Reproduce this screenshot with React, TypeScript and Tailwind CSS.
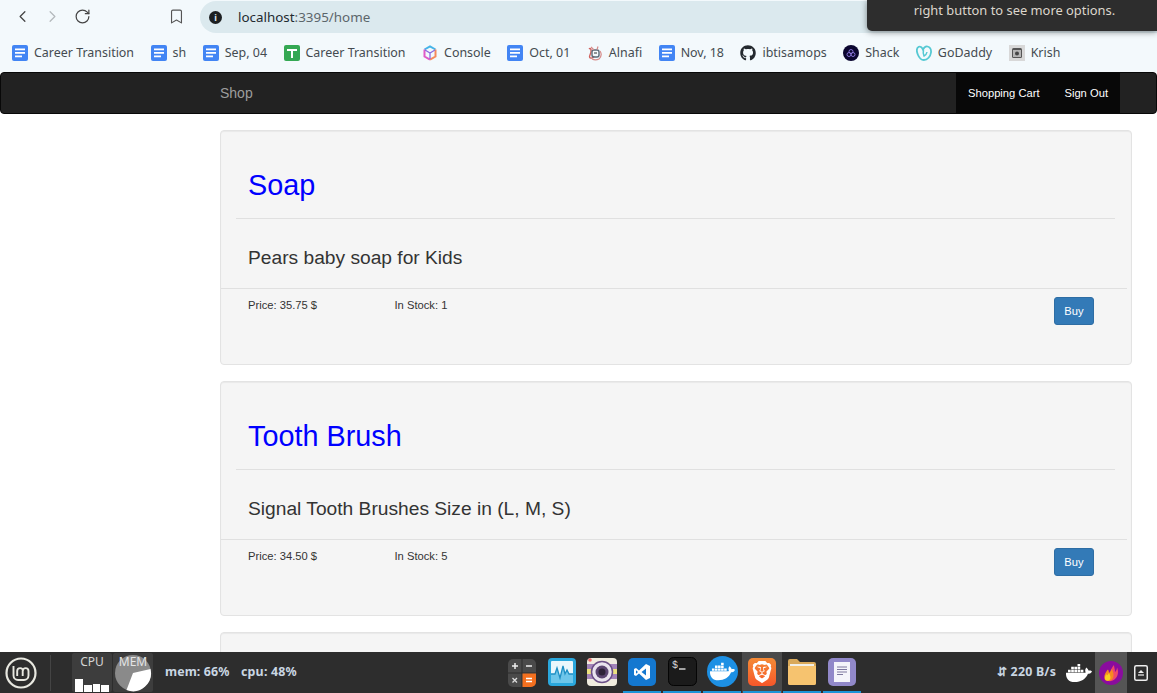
import { ChevronLeft, ChevronRight, RotateCw, Bookmark } from 'lucide-react';
import { FaGithub, FaDocker } from 'react-icons/fa';
import { SiBrave } from 'react-icons/si';

const uiFont = { fontFamily: '"Noto Sans", "Open Sans", sans-serif' };

const DocIcon = () => (
  <svg width="16" height="16" viewBox="0 0 16 16" className="shrink-0">
    <rect width="16" height="16" rx="2" fill="#4285f4" />
    <path d="M3 3.500h10v1.800H3zM3 7h10v1.800H3zM3 10.500h7v1.800H3z" fill="#fff" />
  </svg>
);

const SheetIcon = () => (
  <svg width="16" height="16" viewBox="0 0 16 16" className="shrink-0">
    <rect width="16" height="16" rx="2" fill="#34a853" />
    <path d="M3 4h10v2H9v7H7V6H3z" fill="#fff" />
  </svg>
);

const CubeIcon = () => (
  <svg width="16" height="16" viewBox="0 0 16 16" fill="none" strokeWidth="2" className="shrink-0">
    <path d="M2.500 4.500 8 1.300l5.500 3.200" stroke="#45b4e8" />
    <path d="M2.500 4.500v7L8 14.700" stroke="#e05ac8" />
    <path d="M13.500 4.500v7L8 14.700" stroke="#f58a5c" />
    <path d="M3 5 8 8l5-3M8 8v6" stroke="#8a6ae0" strokeWidth="1.300" />
  </svg>
);

const AlnafiIcon = () => (
  <svg width="16" height="16" viewBox="0 0 16 16" fill="none" className="shrink-0">
    <path d="M2 4c2-2 3 2 1 6s3 4 4 1" stroke="#d0605c" strokeWidth="1.400" />
    <rect x="5" y="5" width="7" height="7" rx="2" stroke="#5a6a78" strokeWidth="1.400" />
    <path d="M4 2l3 3M11 1.500l-1 3M13 6c2 3 1 6-1 8-2 1-5 1-7 0" stroke="#d58a88" strokeWidth="1.200" />
    <path d="M7 8h3" stroke="#333" strokeWidth="1" />
  </svg>
);

const ShackIcon = () => (
  <svg width="16" height="16" viewBox="0 0 16 16" fill="none" className="shrink-0">
    <circle cx="8" cy="8" r="8" fill="#0b0630" />
    <circle cx="6" cy="9.500" r="2" stroke="#8e7be0" strokeWidth="0.900" />
    <circle cx="10" cy="9.500" r="2" stroke="#8e7be0" strokeWidth="0.900" />
    <circle cx="8" cy="6.500" r="2" stroke="#8e7be0" strokeWidth="0.900" />
  </svg>
);

const GoDaddyIcon = () => (
  <svg width="16" height="16" viewBox="0 0 16 16" fill="none" className="shrink-0">
    <path
      d="M11.500 1.500C9.500 1 8 2.500 7 4.500 6 2.500 4.500 1 2.800 1.800 .5 3 .6 6.500 1.800 9.500 3 12.500 5 15 7.800 15c3.700 0 6.700-3.500 7.200-7.500.3-2.800-1-5.300-3.500-6z"
      stroke="#55c9d3"
      strokeWidth="1.800"
    />
    <path d="M7.500 5C7 7 7 9 8 11c1.500-.7 2.700-2.200 3-4" stroke="#55c9d3" strokeWidth="1.500" />
  </svg>
);

const KrishIcon = () => (
  <svg width="16" height="16" viewBox="0 0 16 16" className="shrink-0">
    <rect width="16" height="16" fill="#d8d8d8" />
    <rect x="3" y="3" width="10" height="10" rx="1.500" fill="#555" />
    <rect x="4" y="5" width="8" height="7" fill="#b5b5b5" />
    <circle cx="8" cy="8.500" r="2" fill="#444" />
  </svg>
);

const bookmarks = [
  { label: 'Career Transition', icon: <DocIcon /> },
  { label: 'sh', icon: <DocIcon /> },
  { label: 'Sep, 04', icon: <DocIcon /> },
  { label: 'Career Transition', icon: <SheetIcon /> },
  { label: 'Console', icon: <CubeIcon /> },
  { label: 'Oct, 01', icon: <DocIcon /> },
  { label: 'Alnafi', icon: <AlnafiIcon /> },
  { label: 'Nov, 18', icon: <DocIcon /> },
  { label: 'ibtisamops', icon: <FaGithub className="h-4 w-4 shrink-0 text-[#24292e]" /> },
  { label: 'Shack', icon: <ShackIcon /> },
  { label: 'GoDaddy', icon: <GoDaddyIcon /> },
  { label: 'Krish', icon: <KrishIcon /> },
];

const BrowserChrome = () => (
  <div className="relative h-[72px] shrink-0 bg-[#f3f9fc]" style={uiFont}>
    <div className="flex h-[35px] items-start">
      <div className="flex h-[33px] w-[200px] items-center pl-[13px]">
        <ChevronLeft className="h-[19px] w-[19px] text-[#444]" strokeWidth={1.6} />
        <ChevronRight className="ml-[11px] h-[19px] w-[19px] text-[#b4b9bc]" strokeWidth={1.6} />
        <RotateCw className="ml-[12px] h-[17px] w-[17px] text-[#444]" strokeWidth={1.7} />
        <Bookmark className="ml-[77px] h-[17px] w-[17px] text-[#555]" strokeWidth={1.6} />
      </div>
      <div className="mt-px flex h-[32px] flex-1 items-center rounded-l-[16px] bg-[#dbe9ee] pl-[9px]">
        <span className="flex h-[13px] w-[13px] items-center justify-center rounded-full bg-[#1c1f21] text-[9px] leading-none font-bold text-[#dbe9ee]">
          i
        </span>
        <span className="ml-[16px] text-[13.4px] text-[#1f2a30]">
          localhost<span className="text-[#5b666b]">:3395/home</span>
        </span>
      </div>
    </div>
    <div className="flex h-[36px] items-center gap-[16.5px] pl-3">
      {bookmarks.map((b, i) => (
        <div key={i} className="flex items-center gap-[6px] text-[12.45px] whitespace-nowrap text-[#444b50]">
          {b.icon}
          <span>{b.label}</span>
        </div>
      ))}
    </div>
    {/* tooltip from the desktop lying over the address bar */}
    <div className="absolute top-0 right-0 flex h-[31px] w-[290px] items-end justify-center rounded-bl-[5px] bg-[#2d2d2d] pb-[14px] pl-[5px] text-[12.9px] leading-none text-[#dcd6cc] shadow-[0_1px_6px_rgba(0,0,0,0.45)]">
      right button to see more options.
    </div>
  </div>
);

const Navbar = () => (
  <nav className="flex h-[42px] shrink-0 items-stretch rounded-[4px] border border-[#080808] bg-[#222] pr-[36px] font-['Liberation_Sans',sans-serif]">
    <div className="flex flex-1 items-center pl-[219px] text-[14px] text-[#9d9d9d]">Shop</div>
    <div className="flex w-[164px] items-center justify-between bg-[#080808] px-[12px] text-[11.2px] text-white">
      <span>Shopping Cart</span>
      <span>Sign Out</span>
    </div>
  </nav>
);

const products = [
  { name: 'Soap', description: 'Pears baby soap for Kids', price: '35.75', stock: 1 },
  { name: 'Tooth Brush', description: 'Signal Tooth Brushes Size in (L, M, S)', price: '34.50', stock: 5 },
];

const cardClass = 'rounded-[4px] border border-[#e3e3e3] bg-[#f5f5f5] shadow-[inset_0_1px_1px_rgba(0,0,0,0.05)]';

const ProductCard = ({ name, description, price, stock }: (typeof products)[number]) => (
  <div className={cardClass}>
    <h1 className="mt-[38px] pl-[27px] text-[28.8px] leading-[33px] text-[#0000ff]">{name}</h1>
    <hr className="mt-[16px] mr-[16px] ml-[15px] border-t border-[#e0e0e0]" />
    <h4 className="mt-[29px] pl-[27px] text-[19.2px] leading-[20px] text-[#333]">{description}</h4>
    <hr className="mt-[20px] mr-[4px] border-t border-[#e0e0e0]" />
    <div className="flex items-start pt-[8px] pr-[37px] pb-[39px] pl-[27px] text-[11.2px] leading-[16px] text-[#333]">
      <span className="w-[146.500px]">Price: {price} $</span>
      <span className="flex-1">In Stock: {stock}</span>
      <button className="h-[28px] w-[40px] rounded-[3px] border border-[#2e6da4] bg-[#337ab7] text-[11.2px] text-white">
        Buy
      </button>
    </div>
  </div>
);

const CalcIcon = () => (
  <svg width="28" height="28" viewBox="0 0 28 28">
    <rect width="28" height="28" rx="5" fill="#4a4a4a" />
    <path d="M14 0v28M0 14h28" stroke="#2d2d2d" strokeWidth="1" />
    <path d="M14.500 14.500H28V23a5 5 0 0 1-5 5h-8.500z" fill="#f4701f" />
    <path d="M4 7h6M7 4v6M18 7h6" stroke="#eee" strokeWidth="1.500" />
    <path d="M4.500 19l4.500 4.500M9 19l-4.500 4.500" stroke="#ddd" strokeWidth="1.300" />
    <path d="M18 19.500h6M18 22.500h6" stroke="#fff" strokeWidth="1.400" />
  </svg>
);

const MonitorIcon = () => (
  <svg width="28" height="28" viewBox="0 0 28 28">
    <rect width="28" height="28" rx="4" fill="#2aa7dc" />
    <rect x="3" y="3" width="22" height="22" rx="1" fill="#eaf7fc" />
    <path d="M3 25v-9h4l2-6 3 10 3-12 2 8 2-4 2 4h4v9z" fill="#6ec6ea" />
    <path d="M3 16h4l2-6 3 10 3-12 2 8 2-4 2 4h4" fill="none" stroke="#1e8fc4" strokeWidth="1.300" />
  </svg>
);

const CameraIcon = () => (
  <svg width="30" height="30" viewBox="0 0 30 30">
    <rect y="1" width="30" height="28" rx="4" fill="#f0ecdf" />
    <rect y="7" width="30" height="5" fill="#a283b8" />
    <rect y="12" width="30" height="5" fill="#ece27f" />
    <rect y="17" width="30" height="5" fill="#a283b8" />
    <circle cx="15" cy="15" r="10.500" fill="#e9e3ee" stroke="#6b4f86" strokeWidth="1.500" />
    <circle cx="15" cy="15" r="6.500" fill="#5a4470" />
    <circle cx="15" cy="15" r="3.500" fill="#2d2238" />
    <circle cx="3" cy="3" r="1.800" fill="#ef6a6a" />
  </svg>
);

const VsCodeIcon = () => (
  <svg width="28" height="28" viewBox="0 0 28 28">
    <rect width="28" height="28" rx="5" fill="#1478d0" />
    <path d="M18 6 11 12.500 8 10 6 11v6l2 1 3-2.500L18 22l4-2V8zM18 10.500v7L13.500 14zM8 12.200 10 14l-2 1.800z" fill="#fff" />
  </svg>
);

const TerminalIcon = () => (
  <svg width="29" height="29" viewBox="0 0 29 29">
    <rect x="0.500" y="0.500" width="28" height="28" rx="5" fill="#1b1b1b" stroke="#050505" />
    <text x="4" y="11" fill="#ddd" fontSize="10" fontFamily="Liberation Mono, monospace">$</text>
    <path d="M11 12h6.500" stroke="#ddd" strokeWidth="1.400" />
  </svg>
);

const FolderIcon = () => (
  <svg width="28" height="26" viewBox="0 0 28 26">
    <path d="M0 2a2 2 0 0 1 2-2h7l3 3h14a2 2 0 0 1 2 2v19a2 2 0 0 1-2 2H2a2 2 0 0 1-2-2z" fill="#d9a95a" />
    <rect x="2" y="5" width="24" height="3" fill="#f1efe8" />
    <path d="M0 7h28v17a2 2 0 0 1-2 2H2a2 2 0 0 1-2-2z" fill="#f6c36f" />
  </svg>
);

const TextEditorIcon = () => (
  <svg width="28" height="28" viewBox="0 0 28 28">
    <rect width="28" height="28" rx="5" fill="#9188c9" />
    <rect x="6" y="4" width="16" height="20" fill="#f4f4fa" />
    <path d="M9 9h10M9 11.500h10M9 14h10M9 16.500h6" stroke="#6f6a94" strokeWidth="0.900" />
  </svg>
);

const dockApps = [
  { icon: <MonitorIcon />, open: false, active: false },
  { icon: <CameraIcon />, open: false, active: false },
  { icon: <VsCodeIcon />, open: true, active: false },
  { icon: <TerminalIcon />, open: true, active: false },
  {
    icon: (
      <span className="flex h-[31px] w-[31px] items-center justify-center rounded-full bg-[#1d90e4]">
        <FaDocker className="h-[25px] w-[25px] text-white" />
      </span>
    ),
    open: true,
    active: false,
  },
  {
    icon: (
      <span className="flex h-[28px] w-[28px] items-center justify-center rounded-[5px] bg-gradient-to-b from-[#f58a36] to-[#f5562a]">
        <SiBrave className="h-[22px] w-[22px] text-white" />
      </span>
    ),
    open: true,
    active: true,
  },
  { icon: <FolderIcon />, open: true, active: false },
  { icon: <TextEditorIcon />, open: true, active: false },
];

const Taskbar = () => (
  <div className="flex h-[41px] shrink-0 items-center bg-[#2d2d2d]" style={uiFont}>
    {/* mint logo */}
    <svg width="32" height="32" viewBox="0 0 32 32" fill="none" className="ml-[5px] shrink-0 text-[#e8e8e0]" stroke="currentColor">
      <circle cx="16" cy="16" r="14.500" strokeWidth="2.200" />
      <path d="M8.500 9v9.500a4.500 4.500 0 0 0 4.500 4.500h6a4.500 4.500 0 0 0 4.500-4.500V14a2.900 2.900 0 0 0-5.800 0v5M18 14a2.900 2.900 0 0 0-5.800 0v5" strokeWidth="1.900" />
    </svg>
    <div className="ml-[13px] h-[36px] w-px shrink-0 bg-[#444]" />
    <div className="relative ml-[21px] flex h-[39px] w-[40px] shrink-0 items-end gap-px rounded-[2px] bg-[#3d3d3d] px-[3px]">
      <span className="absolute top-[2px] left-0 w-full text-center text-[12px] leading-[14px] text-[#d5d5d5]">CPU</span>
      <span className="h-[13px] w-[8px] bg-white" />
      <span className="h-[7px] w-[8px] bg-white" />
      <span className="h-[8px] w-[8px] bg-white" />
      <span className="h-[7px] w-[8px] bg-white" />
    </div>
    <div className="relative ml-px h-[39px] w-[40px] shrink-0 rounded-[2px] bg-[#3d3d3d]">
      <svg width="38" height="38" viewBox="0 0 38 38" className="absolute top-px left-px">
        <circle cx="19" cy="19" r="18" fill="#8a8a8a" />
        <path d="M19 19 36.500 15a18 18 0 0 1-24 21z" fill="#fff" />
      </svg>
      <span className="absolute top-[2px] left-0 w-full text-center text-[12px] leading-[14px] text-[#e5e5e5]">MEM</span>
    </div>
    <span className="ml-[12px] w-[76px] shrink-0 text-[12.4px] font-bold tracking-[0.1px] text-[#c9d6e2]">mem: 66%</span>
    <span className="w-[60px] shrink-0 text-[12.4px] font-bold tracking-[0.2px] text-[#c9d6e2]">cpu: 48%</span>

    <div className="ml-[201px] flex h-full shrink-0">
      <div className="flex h-full w-[40px] items-center justify-center">
        <CalcIcon />
      </div>
      {dockApps.map((app, i) => (
        <div
          key={i}
          className={`flex h-full w-[40px] items-center justify-center ${app.active ? 'bg-[#4a4a4a]' : ''}`}
        >
          <div className={`flex h-full w-[38px] items-center justify-center border-b-2 ${app.open ? 'border-[#1c94d8]' : 'border-transparent'}`}>
            {app.icon}
          </div>
        </div>
      ))}
    </div>

    <span className="ml-[135px] w-[62px] shrink-0 text-[12.4px] font-bold tracking-[0.2px] whitespace-nowrap text-[#c9d6e2]">⇵ 220 B/s</span>
    <FaDocker className="ml-[7px] h-[26px] w-[26px] shrink-0 text-white" />
    <div className="ml-[3px] flex h-full w-[32px] shrink-0 items-center justify-center bg-[#555]">
      <svg width="24" height="24" viewBox="0 0 24 24">
        <circle cx="12" cy="12" r="12" fill="#8a0c9e" />
        <path d="M9 20c5 1 10-3 10-9 0-2-.5-3.500-1-4.500 0 2-1 3.500-2 4.500 0-3-1-5-1-7-2 2-3.500 5-3.500 8z" fill="#f0486a" />
        <path d="M6 19c3 2 8 1 8.500-4 .3-3-.8-5-1.800-7-1 2-1.700 3-2.700 4 0-1.500-.5-2.500-1-3.500C7 10.500 4 15 6 19z" fill="#f58a20" />
        <path d="M6.500 19c2.500 1.500 5 .5 5-2.500 0-2-1-3-1.500-4.500-1 1.500-1.500 2-2 2.500-.3-.5-.4-1-.5-1.500-1.500 2-2 4-1 6z" fill="#f8d024" />
      </svg>
    </div>
    <svg width="14" height="16" viewBox="0 0 14 16" fill="none" className="ml-[7px] shrink-0">
      <rect x="0.750" y="0.750" width="12.500" height="14.500" rx="1.500" stroke="#eee" strokeWidth="1.500" />
      <path d="M7 5l3 3H4z" fill="#eee" />
      <path d="M4 10h6" stroke="#eee" strokeWidth="1.200" />
    </svg>
  </div>
);

export default function App() {
  return (
    <div className="flex h-[693px] flex-col overflow-hidden bg-white font-['Liberation_Sans',sans-serif]">
      <BrowserChrome />
      <Navbar />
      <main className="flex min-h-0 flex-1 flex-col gap-[16px] overflow-hidden pt-[16px] pr-[25px] pl-[220px]">
        {products.map((p) => (
          <div key={p.name} className="shrink-0">
            <ProductCard {...p} />
          </div>
        ))}
        {/* next card, cut off by the taskbar */}
        <div className={`h-[60px] shrink-0 ${cardClass}`} />
      </main>
      <Taskbar />
    </div>
  );
}
